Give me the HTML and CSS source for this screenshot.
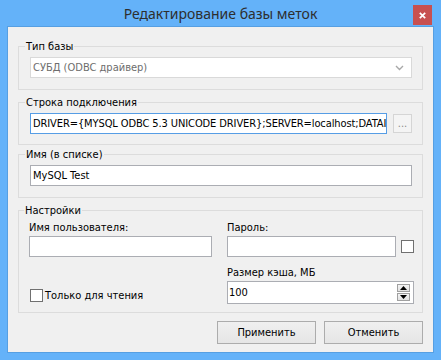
FILE: index.html
```html
<!DOCTYPE html>
<html lang="ru">
<head>
    <meta charset="UTF-8">
    <title>Редактирование базы меток</title>
    <link rel="stylesheet" href="styles.css">
</head>
<body>
    <div class="window">
        <div class="titlebar">
            <span class="title">Редактирование базы меток</span>
            <span class="close">
                <svg width="7" height="7" viewBox="0 0 7 7"><path d="M0.8 0.8L6.2 6.2M6.2 0.8L0.8 6.2" stroke="#fff" stroke-width="1.7"/></svg>
            </span>
        </div>

        <div class="client">
            <fieldset class="group type">
                <legend>Тип базы</legend>
                <div class="combo disabled">
                    <span>СУБД (ODBC драйвер)</span>
                    <svg class="chevron" width="9" height="6" viewBox="0 0 9 6"><path d="M1 1L4.5 4.5L8 1" fill="none" stroke="#a8a8a8" stroke-width="1.4"/></svg>
                </div>
            </fieldset>

            <fieldset class="group conn">
                <legend>Строка подключения</legend>
                <div class="row">
                    <div class="edit focus tight">DRIVER={MYSQL ODBC 5.3 UNICODE DRIVER};SERVER=localhost;DATAI</div>
                    <button class="browse">...</button>
                </div>
            </fieldset>

            <fieldset class="group name">
                <legend>Имя (в списке)</legend>
                <div class="edit">MySQL Test</div>
            </fieldset>

            <fieldset class="group settings">
                <legend>Настройки</legend>
                <div class="grid">
                    <label class="caption">Имя пользователя:</label>
                    <label class="caption">Пароль:</label>

                    <div class="edit"></div>
                    <div class="row">
                        <div class="edit"></div>
                        <span class="check"></span>
                    </div>

                    <span></span>
                    <label class="caption cache">Размер кэша, МБ</label>

                    <label class="checkline"><span class="check"></span>Только для чтения</label>
                    <div class="spin">
                        <span class="value">100</span>
                        <span class="arrows">
                            <span class="arrow"><svg width="7" height="4" viewBox="0 0 7 4"><path d="M0 4L3.5 0L7 4Z" fill="#000"/></svg></span>
                            <span class="arrow"><svg width="7" height="4" viewBox="0 0 7 4"><path d="M0 0L3.5 4L7 0Z" fill="#000"/></svg></span>
                        </span>
                    </div>
                </div>
            </fieldset>

            <div class="actions">
                <button class="btn">Применить</button>
                <button class="btn">Отменить</button>
            </div>
        </div>
    </div>
</body>
</html>
```

FILE: styles.css
```css
* {
    box-sizing: border-box;
}

body {
    margin: 0;
    background: #64b2f9;
    font-family: "DejaVu Sans Condensed", "Liberation Sans", sans-serif;
    font-size: 11px;
    color: #000;
}

.window {
    width: 441px;
    height: 360px;
    background: #64b2f9;
    display: flex;
    flex-direction: column;
}

.titlebar {
    height: 30px;
    position: relative;
    display: flex;
    align-items: center;
    justify-content: center;
}

.title {
    font-family: "Noto Sans", sans-serif;
    font-size: 14px;
    color: #2e2e2e;
}

.close {
    position: absolute;
    right: 9px;
    top: 5px;
    width: 19px;
    height: 20px;
    background: #c75050;
    display: flex;
    align-items: center;
    justify-content: center;
}

.client {
    flex: 1;
    margin: 0 7px 7px;
    border: 1px solid #569fe2;
    background: #f0f0f0;
    padding: 0 10px 8px 10px;
    display: flex;
    flex-direction: column;
}

.group {
    margin: 6px 0 0;
    border: 1px solid #dcdcdc;
    padding: 4px 10px 10px 11px;
    min-width: 0;
}

.group.type {
    margin-top: 13px;
    padding-bottom: 11px;
}

.group.name {
    margin-top: 3px;
    padding-bottom: 11px;
}

.group legend {
    margin-left: -5px;
    padding: 0 1px;
    line-height: 13px;
}

.row {
    display: flex;
    align-items: center;
    gap: 6px;
}

.edit {
    flex: 1;
    height: 21px;
    border: 1px solid #abadb3;
    background: #fff;
    padding: 0 2px;
    line-height: 19px;
    white-space: nowrap;
    overflow: hidden;
}

.edit.focus {
    border-color: #569de5;
}

.edit.tight {
    letter-spacing: -0.1px;
}

.combo {
    height: 21px;
    border: 1px solid #d9d9d9;
    background: #fff;
    padding: 0 7px 0 2px;
    display: flex;
    align-items: center;
    justify-content: space-between;
}

.combo.disabled {
    color: #6d6d6d;
}

.browse {
    width: 19px;
    height: 19px;
    padding: 0 0 3px;
    border: 1px solid #d5d5d5;
    background: #f4f4f4;
    color: #8a8a8a;
    font: inherit;
    line-height: 1;
    display: flex;
    align-items: flex-end;
    justify-content: center;
}

.settings {
    padding: 4px 9px 8px 10px;
}

.grid {
    display: grid;
    grid-template-columns: 183px 187px;
    column-gap: 15px;
}

.caption {
    line-height: 13px;
    margin-bottom: 2px;
}

.caption.cache {
    margin-top: 9px;
}

.check {
    width: 13px;
    height: 13px;
    border: 1px solid #707070;
    background: #fff;
    flex: none;
}

.row .check {
    margin-left: -1px;
}

.checkline {
    align-self: end;
    margin: 0 0 2px 1px;
    display: flex;
    align-items: center;
    gap: 2px;
    line-height: 13px;
}

.spin {
    height: 23px;
    border: 1px solid #abadb3;
    background: #fff;
    padding: 0 3px 0 1px;
    display: flex;
    align-items: center;
    justify-content: space-between;
}

.arrows {
    display: flex;
    flex-direction: column;
    gap: 1px;
}

.arrow {
    width: 13px;
    height: 8px;
    border: 1px solid #a0a0a0;
    background: linear-gradient(#f4f4f4, #e2e2e2);
    display: flex;
    align-items: center;
    justify-content: center;
}

.actions {
    margin-top: 8px;
    display: flex;
    justify-content: flex-end;
    gap: 8px;
}

.btn {
    width: 99px;
    height: 23px;
    border: 1px solid #acacac;
    background: linear-gradient(#f0f0f0, #e5e5e5);
    font: inherit;
    color: #000;
    padding: 0;
}
```
